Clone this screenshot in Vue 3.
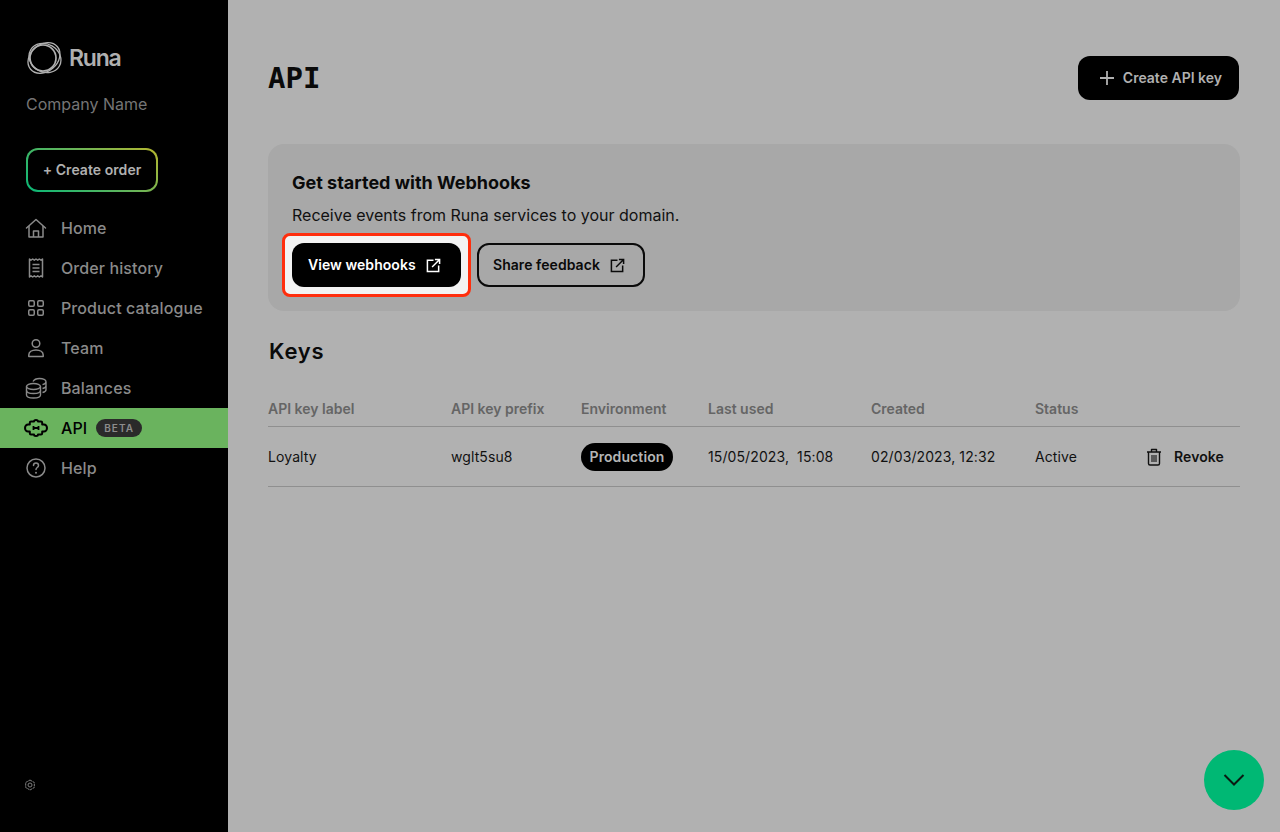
<script setup>
const nav = [
  { label: 'Home', icon: 'home' },
  { label: 'Order history', icon: 'receipt' },
  { label: 'Product catalogue', icon: 'grid' },
  { label: 'Team', icon: 'user' },
  { label: 'Balances', icon: 'coins' },
  { label: 'API', icon: 'puzzle', active: true, badge: 'BETA' },
  { label: 'Help', icon: 'help' }
]
const lastUsed = '15/05/2023,\u00a0 15:08'
</script>

<template>
  <div class="page">
    <aside class="sidebar">
      <div class="logo">
        <svg class="logo-mark" width="36" height="36" viewBox="0 0 36 36" fill="none" stroke="currentColor" stroke-width="1.300">
          <ellipse cx="18" cy="18" rx="17.500" ry="13.500" transform="rotate(-40 18 18)" />
          <ellipse cx="19" cy="18" rx="16.500" ry="14" transform="rotate(30 19 18)" />
          <circle cx="17" cy="18" r="13" stroke-width="1.700" />
        </svg>
        <span class="logo-text">Runa</span>
      </div>
      <div class="company">Company Name</div>
      <button class="create-order">+ Create order</button>
      <nav class="nav">
        <a v-for="item in nav" :key="item.label" class="nav-item" :class="{ active: item.active }">
          <span class="nav-icon">
            <svg v-if="item.icon === 'home'" width="22" height="22" viewBox="0 0 22 22" fill="none" stroke="currentColor" stroke-width="1.5" stroke-linejoin="round">
              <path d="M1.500 11 11 2.500l9.500 8.500" stroke-linecap="round" />
              <path d="M4 9v11h14V9" />
              <path d="M8.500 20v-6h5v6" />
            </svg>
            <svg v-else-if="item.icon === 'receipt'" width="22" height="22" viewBox="0 0 22 22" fill="none" stroke="currentColor" stroke-width="1.5" stroke-linejoin="round">
              <path d="M4.500 2 6 3.200 7.700 2l1.600 1.200L11 2l1.700 1.200L14.300 2 16 3.200 17.500 2v18L16 18.800 14.300 20l-1.600-1.200L11 20l-1.700-1.200L7.700 20 6 18.800 4.500 20Z" />
              <path d="M7.500 7.500h7M7.500 11h7M7.500 14.500h7" />
            </svg>
            <svg v-else-if="item.icon === 'grid'" width="22" height="22" viewBox="0 0 22 22" fill="none" stroke="currentColor" stroke-width="1.5">
              <rect x="3.750" y="3.750" width="5.500" height="5.500" rx="1.200" />
              <rect x="12.750" y="3.750" width="5.500" height="5.500" rx="1.200" />
              <rect x="3.750" y="12.750" width="5.500" height="5.500" rx="1.200" />
              <rect x="12.750" y="12.750" width="5.500" height="5.500" rx="1.200" />
            </svg>
            <svg v-else-if="item.icon === 'user'" width="22" height="22" viewBox="0 0 22 22" fill="none" stroke="currentColor" stroke-width="1.5" stroke-linejoin="round">
              <circle cx="11" cy="6.500" r="3.800" />
              <path d="M3.800 19.500v-1.500c0-3 3-5 7.200-5s7.200 2 7.200 5v1.500Z" />
            </svg>
            <svg v-else-if="item.icon === 'coins'" width="22" height="22" viewBox="0 0 22 22" fill="none" stroke="currentColor" stroke-width="1.400">
              <ellipse cx="8.500" cy="9.500" rx="7" ry="3" />
              <path d="M1.500 9.500v8.500c0 1.700 3.100 3 7 3s7-1.300 7-3V9.500" />
              <path d="M1.500 13.500c0 1.700 3.100 3 7 3s7-1.300 7-3" />
              <path d="M8 4.500c1-1.800 3.500-3 6.500-3 3.600 0 6.500 1.400 6.500 3.200 0 1.300-1.500 2.400-3.500 2.900M17.500 11.500c2-.5 3.500-1.600 3.500-2.800V4.700M17.500 15.500c2-.5 3.500-1.600 3.500-2.800V8.700" />
            </svg>
            <svg v-else-if="item.icon === 'puzzle'" width="24" height="20" viewBox="0 0 24 20" fill="none" stroke="currentColor" stroke-width="2" stroke-linejoin="round">
              <path d="M7 3.500h3c0-1 .8-1.500 2-1.500s2 .5 2 1.500h3c.8 0 1.200.4 1.200 1.200v1.800H20c1.500 0 3 1.500 3 3.500s-1.500 3.500-3 3.500h-1.800v1.800c0 .8-.4 1.200-1.200 1.200h-3c0 1-.8 1.500-2 1.500s-2-.5-2-1.500H7c-.8 0-1.200-.4-1.200-1.200v-1.800H4c-1.500 0-3-1.500-3-3.500s1.500-3.500 3-3.500h1.800V4.700c0-.8.400-1.200 1.200-1.200Z" />
              <path d="M9.500 8v4M14.500 8v4M9.500 10h5" stroke-width="1.800" />
            </svg>
            <svg v-else width="22" height="22" viewBox="0 0 22 22" fill="none" stroke="currentColor" stroke-width="1.500" stroke-linecap="round">
              <circle cx="11" cy="11" r="9" />
              <path d="M8.500 8.500c0-1.500 1.100-2.500 2.500-2.500s2.500 1 2.500 2.400c0 2.100-2.500 2.100-2.500 4.100" />
              <path d="M11 15.700v.1" stroke-width="2" />
            </svg>
          </span>
          <span>{{ item.label }}</span>
          <span v-if="item.badge" class="badge">{{ item.badge }}</span>
        </a>
      </nav>
      <div class="sidebar-foot">
        <svg width="12" height="12" viewBox="0 0 12 12" fill="none" stroke="currentColor" stroke-width="1">
          <path d="M6 1 10.300 3.500v5L6 11 1.700 8.500v-5Z" stroke-dasharray="2.500 .6" />
          <circle cx="6" cy="6" r="2" />
        </svg>
      </div>
    </aside>

    <main class="main">
      <header class="header">
        <h1 class="title">API</h1>
        <button class="btn btn-dark btn-create">
          <svg width="16" height="16" viewBox="0 0 16 16" fill="none" stroke="currentColor" stroke-width="1.800">
            <path d="M8 1v14M1 8h14" />
          </svg>
          Create API key
        </button>
      </header>

      <section class="card">
        <h2 class="card-title">Get started with Webhooks</h2>
        <p class="card-text">Receive events from Runa services to your domain.</p>
        <div class="card-actions">
          <div class="spotlight">
            <button class="btn btn-primary">
              View webhooks
              <svg width="15" height="15" viewBox="0 0 16 16" fill="none" stroke="currentColor" stroke-width="1.600">
                <path d="M8 2.500H1.500v12h12V8" />
                <path d="M6.500 9.500 14.500 1.500M9.500 1.500h5v5" />
              </svg>
            </button>
          </div>
          <button class="btn btn-outline">
            Share feedback
            <svg width="15" height="15" viewBox="0 0 16 16" fill="none" stroke="currentColor" stroke-width="1.600">
              <path d="M8 2.500H1.500v12h12V8" />
              <path d="M6.500 9.500 14.500 1.500M9.500 1.500h5v5" />
            </svg>
          </button>
        </div>
      </section>

      <h2 class="keys-title">Keys</h2>

      <div class="table">
        <div class="row row-head">
          <span>API key label</span>
          <span>API key prefix</span>
          <span>Environment</span>
          <span>Last used</span>
          <span>Created</span>
          <span>Status</span>
          <span></span>
        </div>
        <div class="row row-body">
          <span>Loyalty</span>
          <span>wglt5su8</span>
          <span><span class="pill">Production</span></span>
          <span>{{ lastUsed }}</span>
          <span>02/03/2023, 12:32</span>
          <span>Active</span>
          <span class="revoke">
            <svg width="16" height="18" viewBox="0 0 16 18" fill="none" stroke="currentColor" stroke-width="1.400" stroke-linejoin="round">
              <path d="M1 4h14M5.500 4V1.500h5V4" />
              <path d="M2.500 4v11.500c0 .8.500 1.500 1.500 1.500h8c1 0 1.500-.7 1.500-1.500V4" />
              <path d="M6 7v7M8 7v7M10 7v7" stroke-width="1.100" />
            </svg>
            <b>Revoke</b>
          </span>
        </div>
      </div>
    </main>

    <button class="fab" aria-label="Collapse">
      <svg width="22" height="14" viewBox="0 0 22 14" fill="none" stroke="#0a1a12" stroke-width="2">
        <path d="M1.500 2 11 11.500 20.500 2" />
      </svg>
    </button>
  </div>
</template>

<style>
html, body { margin: 0; background: #b1b1b1; }
</style>

<style scoped>
.page {
  position: relative;
  display: flex;
  height: 832px;
  overflow: hidden;
  font-family: Inter, "Liberation Sans", sans-serif;
  background: #b1b1b1;
  color: #0a0a0a;
}
button { font-family: inherit; cursor: pointer; }
.sidebar {
  flex: 0 0 228px;
  display: flex;
  flex-direction: column;
  align-items: flex-start;
  background: #000;
  padding-top: 40px;
  box-sizing: border-box;
}
.logo {
  display: flex;
  align-items: center;
  gap: 7px;
  margin-left: 26px;
  height: 36px;
  color: #b0b0b0;
}
.logo-text {
  font-size: 23px;
  font-weight: 600;
  letter-spacing: -1.200px;
  line-height: 36px;
}
.company {
  margin: 18px 0 0 26px;
  font-size: 16px;
  line-height: 20px;
  color: #757575;
}
.create-order {
  margin: 34px 0 0 26px;
  width: 132px;
  height: 44px;
  border: 2px solid transparent;
  border-radius: 12px;
  background:
    linear-gradient(#000, #000) padding-box,
    linear-gradient(35deg, #08b777 0%, #66b45a 55%, #b6b62e 100%) border-box;
  color: #b0b0b0;
  font-size: 14px;
  font-weight: 600;
  padding: 0 0 2px;
  letter-spacing: .05px;
}
.nav {
  align-self: stretch;
  margin-top: 16px;
  display: flex;
  flex-direction: column;
}
.nav-item {
  display: flex;
  align-items: center;
  height: 40px;
  padding-left: 18px;
  font-size: 16px;
  font-weight: 500;
  letter-spacing: .1px;
  color: #8a8a8a;
}
.nav-item.active {
  background: #6ab35e;
  color: #000;
}
.nav-icon {
  flex: 0 0 36px;
  display: flex;
  align-items: center;
  justify-content: center;
  margin-right: 7px;
}
.badge {
  margin-left: 9px;
  height: 18px;
  padding: 0 8px;
  border-radius: 9px;
  background: #2a2a2a;
  color: #8c8c8c;
  font-size: 10px;
  font-weight: 600;
  letter-spacing: 1px;
  line-height: 18px;
}
.sidebar-foot {
  margin: auto 0 0 24px;
  padding-bottom: 41px;
  line-height: 0;
  color: #808080;
}
.main {
  flex: 1;
  padding: 56px 40px 0;
  min-width: 0;
}
.header {
  display: flex;
  align-items: center;
  justify-content: space-between;
  height: 44px;
  padding-right: 1px;
}
.title {
  margin: 0;
  font-family: "DejaVu Sans Mono", monospace;
  font-size: 29px;
  font-weight: 700;
}
.btn {
  display: inline-flex;
  align-items: center;
  height: 44px;
  padding: 0 16px 2px;
  border-radius: 12px;
  border: 0;
  font-size: 14px;
  font-weight: 600;
  box-sizing: border-box;
}
.btn svg { margin-top: 2px; }
.btn-dark {
  background: #000;
  color: #b0b0b0;
}
.btn-create {
  gap: 8px;
  padding: 0 17px 2px 21px;
}
.card {
  margin-top: 44px;
  height: 167px;
  box-sizing: border-box;
  padding: 27px 24px 0;
  border-radius: 16px;
  background: #a8a8a8;
}
.card-title {
  margin: 0;
  font-size: 18px;
  font-weight: 700;
  line-height: 24px;
  color: #0a0a0a;
}
.card-text {
  margin: 8px 0 0;
  font-size: 16px;
  line-height: 24px;
  color: #111;
}
.card-actions {
  display: flex;
  align-items: center;
  gap: 15px;
  margin-top: 16px;
}
.spotlight {
  margin: -10px -9px -10px -10px;
  padding: 7px;
  border: 3px solid #ff2e0d;
  border-radius: 8px;
  background: #f3f3f3;
  line-height: 0;
}
.btn-primary {
  gap: 10px;
  background: #000;
  color: #fff;
  width: 169px;
  letter-spacing: .05px;
}
.btn-outline {
  gap: 10px;
  background: transparent;
  border: 2px solid #0a0a0a;
  color: #0a0a0a;
  width: 168px;
  padding: 0 14px 2px;
  letter-spacing: .05px;
}
.keys-title {
  margin: 27px 0 0 1px;
  font-size: 22px;
  font-weight: 600;
  line-height: 26px;
  letter-spacing: .8px;
}
.table { margin-top: 28px; }
.row {
  display: grid;
  grid-template-columns: 183px 130px 127px 163px 164px 1fr auto;
  align-items: center;
  box-sizing: border-box;
  border-bottom: 1px solid #8f8f8f;
  font-size: 14px;
}
.row-head {
  height: 35px;
  font-weight: 600;
  color: #656565;
  padding-top: 8px;
  align-items: start;
  line-height: 17px;
}
.row-body {
  height: 60px;
  color: #111;
  letter-spacing: .1px;
}
.pill {
  display: inline-block;
  height: 28px;
  line-height: 28px;
  padding: 0 8.500px;
  border-radius: 14px;
  background: #000;
  color: #b5b5b5;
  font-weight: 600;
}
.revoke {
  display: flex;
  align-items: center;
  gap: 12px;
  padding-right: 16px;
}
.revoke b { font-weight: 600; }
.fab {
  position: absolute;
  right: 16px;
  bottom: 22px;
  width: 60px;
  height: 60px;
  border: 0;
  border-radius: 50%;
  background: #00b874;
  display: flex;
  align-items: center;
  justify-content: center;
  padding: 0;
}
</style>
